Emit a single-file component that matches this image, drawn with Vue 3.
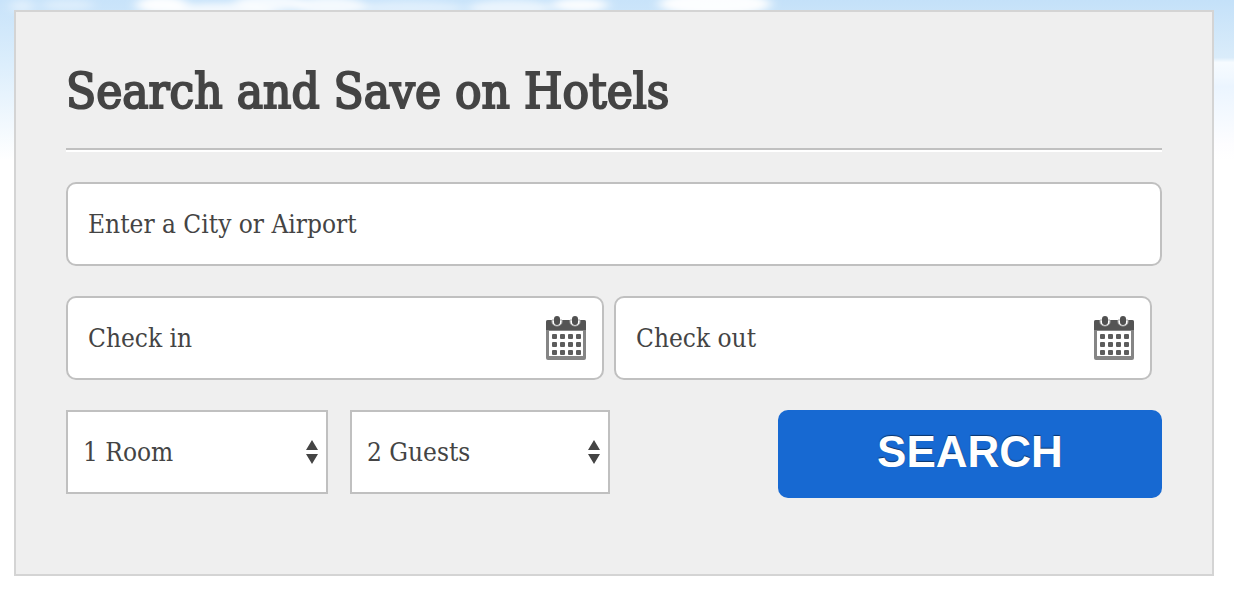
<script setup>
import { ref } from 'vue'

const city = ref('')
const rooms = ref(1)
const guests = ref(2)
const dates = ref([
  { id: 'checkin', label: 'Check in', value: '' },
  { id: 'checkout', label: 'Check out', value: '' },
])
const dotRows = [21, 29, 37]
const dotCols = [9, 17, 25, 33]
</script>

<template>
  <main class="page">
    <svg class="sky" viewBox="0 0 1234 160" preserveAspectRatio="none" aria-hidden="true">
      <defs>
        <linearGradient id="sky-left" x1="0" y1="0" x2="0" y2="1">
          <stop offset="0" stop-color="#c8e3fa" />
          <stop offset="0.4" stop-color="#dceefc" />
          <stop offset="1" stop-color="#ffffff" />
        </linearGradient>
        <linearGradient id="sky-right" x1="0" y1="0" x2="0" y2="1">
          <stop offset="0" stop-color="#c4e1f9" />
          <stop offset="0.36" stop-color="#daecfa" />
          <stop offset="0.39" stop-color="#f6fbff" />
          <stop offset="0.48" stop-color="#f1f8ff" />
          <stop offset="0.54" stop-color="#ebf5ff" />
          <stop offset="0.9" stop-color="#fdfdff" />
          <stop offset="1" stop-color="#ffffff" />
        </linearGradient>
        <filter id="soft" x="-10%" y="-100%" width="120%" height="300%">
          <feGaussianBlur stdDeviation="6 3" />
        </filter>
      </defs>
      <rect width="700" height="160" fill="url(#sky-left)" />
      <rect x="700" width="534" height="160" fill="url(#sky-right)" />
      <g fill="#ffffff" filter="url(#soft)">
        <ellipse cx="22" cy="6" rx="12" ry="7" opacity="0.4" />
        <ellipse cx="68" cy="5" rx="26" ry="6" opacity="0.35" />
        <ellipse cx="162" cy="5" rx="26" ry="9" opacity="0.95" />
        <ellipse cx="222" cy="11" rx="54" ry="8" opacity="0.75" />
        <ellipse cx="270" cy="3" rx="36" ry="8" opacity="0.8" />
        <ellipse cx="330" cy="6" rx="36" ry="9" opacity="0.8" />
        <ellipse cx="410" cy="8" rx="54" ry="7" opacity="0.4" />
        <ellipse cx="510" cy="8" rx="42" ry="8" opacity="0.6" />
        <ellipse cx="580" cy="5" rx="28" ry="7" opacity="0.9" />
        <ellipse cx="715" cy="4" rx="56" ry="12" opacity="0.95" />
      </g>
    </svg>

    <form class="panel" @submit.prevent>
      <h1 class="title">Search and Save on Hotels</h1>

      <input
        v-model="city"
        class="field"
        type="text"
        aria-label="Enter a City or Airport"
        placeholder="Enter a City or Airport"
      />

      <div class="dates">
        <div v-for="d in dates" :key="d.id" class="date">
          <input
            v-model="d.value"
            class="field"
            type="text"
            :aria-label="d.label"
            :placeholder="d.label"
          />
          <svg class="calendar" viewBox="0 0 42 46" aria-hidden="true">
            <rect x="1" y="5" width="40" height="40" rx="2" fill="#858585" />
            <path d="M1 15V7q0-2 2-2h36q2 0 2 2v8z" fill="#545454" />
            <rect x="4" y="16" width="34" height="25" fill="#ffffff" />
            <g fill="#ffffff" stroke="#a8a8a8">
              <path d="M7 5v2a5 4 0 0 0 10 0V5z" />
              <path d="M25 5v2a5 4 0 0 0 10 0V5z" />
            </g>
            <rect x="9" y="1" width="6" height="9" rx="3" fill="#505050" />
            <rect x="27" y="1" width="6" height="9" rx="3" fill="#505050" />
            <template v-for="y in dotRows" :key="y">
              <rect
                v-for="x in dotCols"
                :key="x"
                :x="x - 2"
                :y="y - 2"
                width="5"
                height="5"
                rx="1"
                fill="#5c5c5c"
              />
            </template>
          </svg>
        </div>
      </div>

      <div class="actions">
        <div class="picker">
          <select v-model="rooms" class="select" aria-label="Rooms">
            <option v-for="n in 4" :key="n" :value="n">{{ n }} Room{{ n > 1 ? 's' : '' }}</option>
          </select>
          <svg class="arrows" viewBox="0 0 12 24" aria-hidden="true">
            <path d="M6 0l6 10H0zM0 14h12L6 24z" fill="#444444" />
          </svg>
        </div>
        <div class="picker">
          <select v-model="guests" class="select" aria-label="Guests">
            <option v-for="n in 8" :key="n" :value="n">{{ n }} Guest{{ n > 1 ? 's' : '' }}</option>
          </select>
          <svg class="arrows" viewBox="0 0 12 24" aria-hidden="true">
            <path d="M6 0l6 10H0zM0 14h12L6 24z" fill="#444444" />
          </svg>
        </div>
        <button class="search" type="submit">SEARCH</button>
      </div>
    </form>
  </main>
</template>

<style>
body {
  background: #ffffff;
}
</style>

<style scoped>
.page {
  position: relative;
  padding: 10px 20px 20px 14px;
  color: #444444;
  font-family: 'Roboto Slab', 'DejaVu Serif Condensed', 'DejaVu Serif', serif;
}

.sky {
  position: absolute;
  inset: 0 0 auto;
  width: 100%;
  height: 160px;
}

.panel {
  position: relative;
  display: flex;
  flex-direction: column;
  gap: 30px;
  padding: 50px 50px 76px;
  border: 2px solid #d4d4d4;
  background: #efefef;
}

.title {
  margin: 0 0 2px;
  padding-bottom: 26px;
  border-bottom: 2px solid #c0c0c0;
  box-shadow: 0 2px 0 #ffffff;
  font-size: 49px;
  font-weight: 400;
  line-height: 60px;
  white-space: nowrap;
  -webkit-text-stroke: 2px #444444;
}

.field,
.select {
  box-sizing: border-box;
  display: block;
  width: 100%;
  height: 84px;
  margin: 0;
  border: 2px solid #c0c0c0;
  background: #ffffff;
  color: #444444;
  font-family: inherit;
  font-size: 26px;
}

.field {
  padding: 0 20px;
  border-radius: 10px;
}

.field::placeholder {
  color: #444444;
  opacity: 1;
}

.dates {
  display: flex;
  gap: 10px;
  padding-right: 10px;
}

.date {
  position: relative;
  flex: 1;
}

.calendar {
  position: absolute;
  top: 19px;
  right: 17px;
  width: 42px;
  height: 46px;
}

.actions {
  display: grid;
  grid-template-columns: 262fr 260fr 124fr 384fr;
  align-items: start;
  gap: 22px;
}

.picker {
  position: relative;
}

.select {
  padding: 0 36px 0 15px;
  border-radius: 0;
  appearance: none;
}

.arrows {
  position: absolute;
  top: 30px;
  right: 10px;
  width: 12px;
  height: 24px;
  pointer-events: none;
}

.search {
  grid-column: 4;
  height: 88px;
  padding: 0 0 4px;
  border: 0;
  border-radius: 10px;
  background: #1769d2;
  color: #ffffff;
  font-family: 'Liberation Sans', Arial, sans-serif;
  font-size: 44px;
  font-weight: 700;
  text-shadow: 0 -1px 1px rgba(0, 0, 0, 0.5);
}
</style>
